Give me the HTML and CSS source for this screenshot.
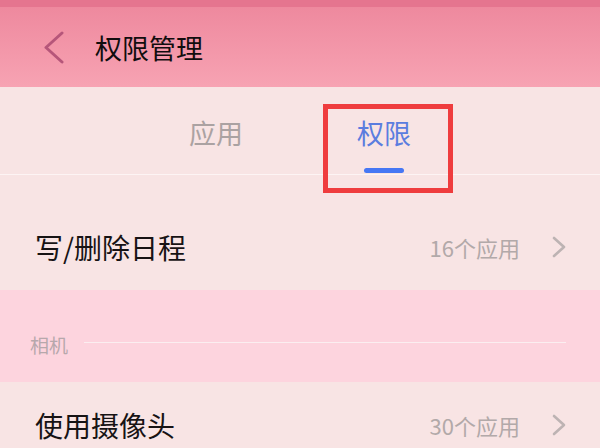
FILE: index.html
```html
<!DOCTYPE html>
<html lang="zh-CN">
<head>
<meta charset="utf-8">
<link rel="stylesheet" href="styles.css">
</head>
<body>
<div class="screen">
  <div class="statusbar"></div>
  <header class="header">
    <svg class="back" width="20" height="33" viewBox="0 0 20 33"><polyline points="18,2 2,16.5 18,31" fill="none" stroke="#b6567a" stroke-width="3" stroke-linecap="round" stroke-linejoin="round"/></svg>
    <h1 class="title">权限管理</h1>
  </header>
  <nav class="tabs">
    <div class="tab">
      <span class="tab-label">应用</span>
      <span class="tab-bar"></span>
    </div>
    <div class="tab active">
      <span class="tab-label">权限</span>
      <span class="tab-bar"></span>
    </div>
  </nav>
  <div class="list first">
    <div class="row">
      <span class="row-title">写/删除日程</span>
      <span class="row-meta">16个应用</span>
      <svg class="chev" width="14" height="22" viewBox="0 0 14 22"><polyline points="2,2 12,11 2,20" fill="none" stroke="#bdb3b3" stroke-width="2.6" stroke-linecap="round" stroke-linejoin="round"/></svg>
    </div>
  </div>
  <div class="section">
    <span class="section-label">相机</span>
    <span class="section-line"></span>
  </div>
  <div class="list">
    <div class="row">
      <span class="row-title">使用摄像头</span>
      <span class="row-meta">30个应用</span>
      <svg class="chev" width="14" height="22" viewBox="0 0 14 22"><polyline points="2,2 12,11 2,20" fill="none" stroke="#bdb3b3" stroke-width="2.6" stroke-linecap="round" stroke-linejoin="round"/></svg>
    </div>
  </div>
  <div class="highlight"></div>
</div>
</body>
</html>
```

FILE: styles.css
```css
* { box-sizing: border-box; }
html, body { margin: 0; padding: 0; }
body {
  width: 600px;
  height: 448px;
  overflow: hidden;
  background: #f8e4e4;
  font-family: "Noto Sans CJK SC", "Noto Sans", sans-serif;
}
.screen {
  position: relative;
  width: 600px;
  height: 448px;
  background: #f8e4e4;
}
.statusbar {
  height: 7px;
  background: #e5758f;
}
.header {
  height: 80px;
  display: flex;
  align-items: center;
  padding-left: 44px;
  background: linear-gradient(#ee899e, #f7a3b3);
}
.back { display: block; margin-top: 1px; }
.title {
  margin: 0 0 0 31px;
  font-size: 27px;
  font-weight: 400;
  color: #110d0e;
  line-height: 1;
}
.tabs {
  height: 88px;
  display: flex;
  justify-content: center;
  border-bottom: 1px solid #fdf4f4;
}
.tab {
  width: 168px;
  display: flex;
  flex-direction: column;
  align-items: center;
  padding-top: 27px;
}
.tab-label {
  font-size: 27px;
  line-height: 38px;
  color: #aba2a2;
}
.tab-bar {
  width: 40px;
  height: 5px;
  border-radius: 3px;
  margin-top: 16px;
  background: transparent;
}
.tab.active .tab-label { color: #5b7ddf; }
.tab.active .tab-bar { background: #4677f4; }
.list.first { margin-top: 29px; }
.row {
  height: 86px;
  display: flex;
  align-items: center;
  padding: 0 34px 0 35px;
}
.row-title {
  flex: 1;
  font-size: 28px;
  color: #171314;
  line-height: 1;
}
.row-meta {
  font-size: 22px;
  color: #b2a9a9;
  margin-right: 32px;
  line-height: 1;
}
.chev { display: block; }
.section {
  height: 92px;
  background: #fdd4de;
  display: flex;
  align-items: center;
  padding: 16px 34px 0 30px;
}
.section-label {
  font-size: 19px;
  color: #b7a8ac;
  line-height: 1;
}
.section-line {
  flex: 1;
  height: 1px;
  margin-left: 16px;
  margin-top: -3px;
  background: #fbeef0;
}
.highlight {
  position: absolute;
  left: 323px;
  top: 104px;
  width: 130px;
  height: 89px;
  border: 5px solid #ef3c3e;
}
```
